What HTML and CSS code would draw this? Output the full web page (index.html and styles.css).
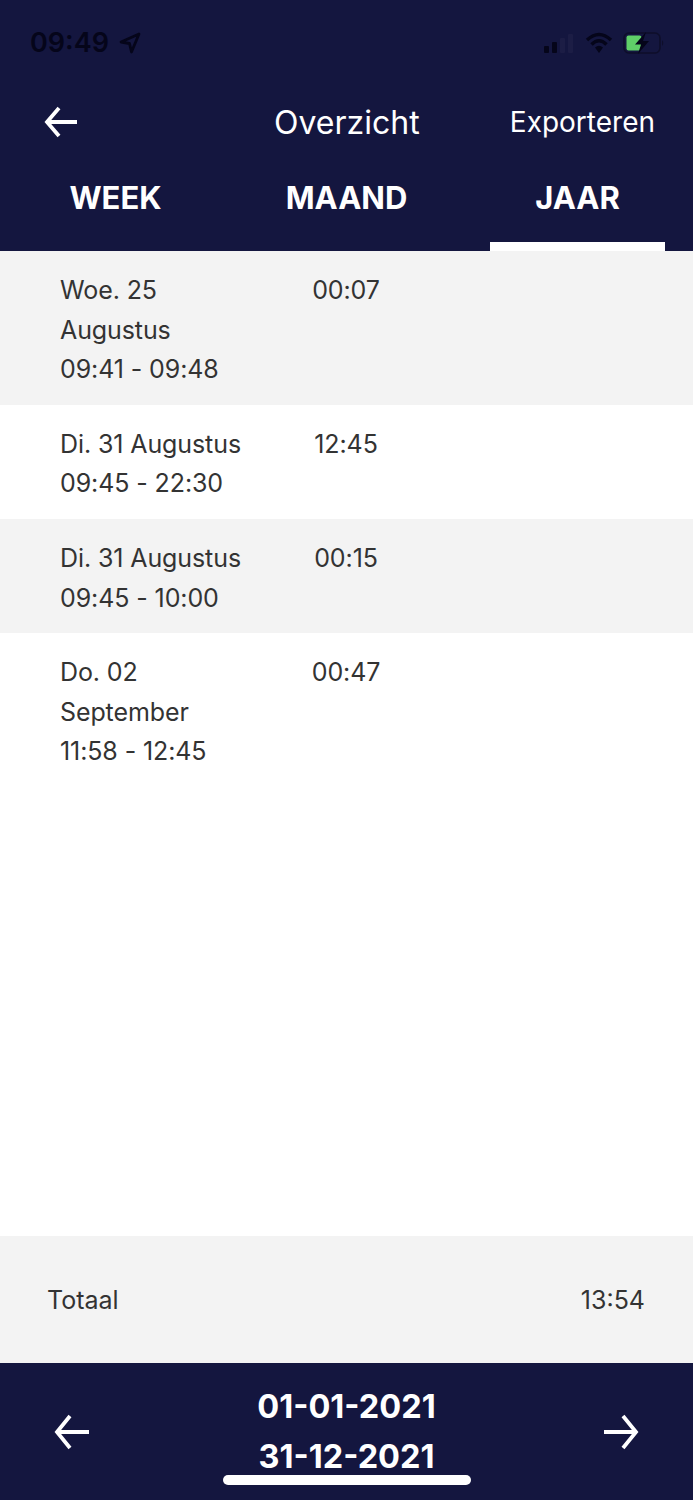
FILE: index.html
```html
<!DOCTYPE html>
<html lang="nl">
<head>
    <meta charset="UTF-8">
    <meta name="viewport" content="width=device-width, initial-scale=1.0">
    <title>Overzicht</title>
    <link rel="stylesheet" href="styles.css">
</head>
<body>
    <div class="app">
        <header class="header">
            <div class="status">
                <div class="status-left">
                    <span class="clock">09:49</span>
                    <svg class="loc" width="24" height="24" viewBox="0 0 24 24"><path d="M21 3 L3 11 L11.5 12.5 L13.5 21 Z" fill="none" stroke="#05051a" stroke-width="2.8" stroke-linejoin="round"/></svg>
                </div>
                <div class="status-right">
                    <svg width="32" height="20" viewBox="0 0 32 20">
                        <rect x="1" y="13" width="5" height="7" rx="1" fill="#05051a"/>
                        <rect x="9" y="9" width="5" height="11" rx="1" fill="#05051a"/>
                        <rect x="17" y="5" width="5" height="15" rx="1" fill="#1c1d45"/>
                        <rect x="25" y="1" width="5" height="19" rx="1" fill="#1c1d45"/>
                    </svg>
                    <svg width="28" height="22" viewBox="0 0 28 22">
                        <path d="M2 8 Q14 -3 26 8 M6.5 12.5 Q14 5 21.5 12.5" fill="none" stroke="#05051a" stroke-width="3.4"/>
                        <path d="M10 15.5 Q14 12 18 15.5 L14 21 Z" fill="#05051a"/>
                    </svg>
                    <svg width="42" height="22" viewBox="0 0 42 22">
                        <rect x="1" y="1" width="36" height="20" rx="5" fill="none" stroke="#0e0e2a" stroke-width="1.6"/>
                        <rect x="3.500" y="3.500" width="15" height="15" rx="2" fill="#5fd068"/>
                        <path d="M39 8 Q41.500 11 39 14 Z" fill="#0e0e2a"/>
                        <path d="M23 0 L12 12.500 L18 12.500 L15 22 L26 9 L20 9 Z" fill="#05051a"/>
                    </svg>
                </div>
            </div>
            <div class="titlebar">
                <svg class="arrow-top" width="36" height="36" viewBox="0 0 36 36"><path d="M33 18 H3 M15 4 L3 18 L15 32" fill="none" stroke="#fff" stroke-width="3.8"/></svg>
                <h1 class="title">Overzicht</h1>
                <span class="export">Exporteren</span>
            </div>
            <nav class="tabs">
                <div class="tab">WEEK</div>
                <div class="tab">MAAND</div>
                <div class="tab active">JAAR</div>
            </nav>
        </header>

        <main class="list">
            <div class="row">
                <div class="when">Woe. 25 Augustus<br>09:41 - 09:48</div>
                <div class="duration">00:07</div>
            </div>
            <div class="row">
                <div class="when">Di. 31 Augustus<br>09:45 - 22:30</div>
                <div class="duration">12:45</div>
            </div>
            <div class="row">
                <div class="when">Di. 31 Augustus<br>09:45 - 10:00</div>
                <div class="duration">00:15</div>
            </div>
            <div class="row">
                <div class="when">Do. 02 September<br>11:58 - 12:45</div>
                <div class="duration">00:47</div>
            </div>
        </main>

        <section class="total">
            <span>Totaal</span>
            <span>13:54</span>
        </section>

        <footer class="period">
            <svg width="36" height="36" viewBox="0 0 36 36"><path d="M35 18 H3 M16 2 L3 18 L16 34" fill="none" stroke="#fff" stroke-width="3.8"/></svg>
            <div class="dates">
                <div>01-01-2021</div>
                <div>31-12-2021</div>
            </div>
            <svg width="36" height="36" viewBox="0 0 36 36"><path d="M1 18 H33 M20 2 L33 18 L20 34" fill="none" stroke="#fff" stroke-width="3.8"/></svg>
            <div class="home-bar"></div>
        </footer>
    </div>
</body>
</html>
```

FILE: styles.css
```css
* {
    box-sizing: border-box;
}
body {
    margin: 0;
    font-family: Inter, "Liberation Sans", sans-serif;
    background-color: white;
    color: #333;
}
.app {
    display: flex;
    flex-direction: column;
    height: 1500px;
}
.header {
    background-color: #14163f;
    color: white;
    height: 251px;
    display: flex;
    flex-direction: column;
}
.status {
    height: 85px;
    padding: 28px 28px 0 30px;
    display: flex;
    justify-content: space-between;
    align-items: flex-start;
}
.status-left {
    display: flex;
    align-items: center;
    gap: 9px;
}
.clock {
    color: #05051a;
    font-size: 27px;
    font-weight: 600;
    line-height: 30px;
}
.status-right {
    display: flex;
    align-items: center;
    gap: 10px;
    height: 30px;
}
.titlebar {
    height: 74px;
    padding: 0 38px 0 44px;
    display: flex;
    align-items: center;
}
.title {
    margin: 0;
    flex: 1;
    padding-left: 194px;
    font-size: 32px;
    font-weight: 400;
}
.export {
    font-size: 28px;
}
.tabs {
    flex: 1;
    display: grid;
    grid-template-columns: repeat(3, 231px);
}
.tab {
    margin: 0 28px;
    padding-top: 16px;
    text-align: center;
    font-size: 31px;
    font-weight: 700;
    line-height: 46px;
}
.tab.active {
    border-bottom: 9px solid white;
}
.list {
    flex: 1;
}
.row {
    display: grid;
    grid-template-columns: 200px 148px;
    column-gap: 12px;
    padding: 20px 0 15.25px 60px;
    font-size: 25px;
    line-height: 39.5px;
    letter-spacing: -0.1px;
}
.row:nth-child(odd) {
    background-color: #f3f3f3;
}
.duration {
    text-align: center;
}
.total {
    height: 127px;
    background-color: #f3f3f3;
    padding: 0 48px 0 47px;
    display: flex;
    justify-content: space-between;
    align-items: center;
    font-size: 25px;
}
.period {
    height: 137px;
    background-color: #14163f;
    color: white;
    padding: 0 54px;
    display: flex;
    justify-content: space-between;
    align-items: center;
    position: relative;
}
.dates {
    text-align: center;
    font-size: 32.5px;
    font-weight: 700;
    line-height: 50px;
}
.home-bar {
    position: absolute;
    left: 223px;
    bottom: 15px;
    width: 248px;
    height: 10px;
    border-radius: 5px;
    background-color: white;
}
```
